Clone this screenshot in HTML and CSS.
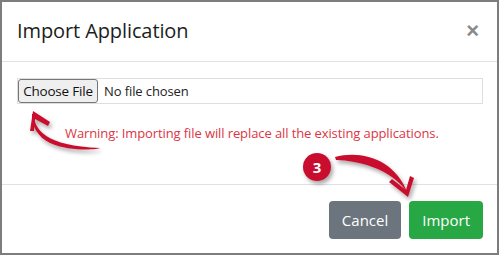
FILE: index.html
```html
<!DOCTYPE html>
<html lang="en">
<head>
  <meta charset="UTF-8" />
  <title>Import Application</title>
  <link rel="stylesheet" href="styles.css">
</head>
<body>

<div class="modal">
  <div class="modal-header">
    <h5 class="modal-title">Import Application</h5>
    <button class="close" type="button">&times;</button>
  </div>

  <div class="modal-body">
    <input type="file" class="file-input">
    <p class="warning">Warning: Importing file will replace all the existing applications.</p>
  </div>

  <div class="modal-footer">
    <button class="btn btn-secondary" type="button">Cancel</button>
    <button class="btn btn-success" type="button">Import</button>
  </div>

  <!-- annotations drawn over the dialog -->
  <svg class="marks" width="499" height="255" viewBox="0 0 499 255">
    <defs>
      <filter id="shadow" x="-20%" y="-20%" width="140%" height="140%">
        <feDropShadow dx="2" dy="3" stdDeviation="2" flood-color="#000" flood-opacity="0.35"/>
      </filter>
    </defs>
    <g filter="url(#shadow)" fill="#c8102e">
      <path d="M34 114 C 34 130, 46 146, 100 148 C 98 149.5, 70 152, 50 143 C 38 137, 31 126, 32 114 Z"/>
      <path d="M33 111 L 30 131 L 34 131 L 35 119 L 48 126 L 50 122 Z"/>
      <path d="M335 157 C 360 150, 395 158, 408 194 C 404 186, 384 162, 336 160 Z"/>
      <path d="M408 197 L 389 182 L 392 179 L 406 190 L 410 176 L 414 178 Z"/>
      <circle cx="317" cy="167" r="14"/>
    </g>
    <text class="badge-text" x="317" y="172.5" text-anchor="middle">3</text>
  </svg>
</div>

</body>
</html>
```

FILE: styles.css
```css
* {
  box-sizing: border-box;
}

body {
  margin: 0;
  padding: 0;
  background: #fff;
  font-family: "Open Sans", "Noto Sans", sans-serif;
  color: #212529;
}

.modal {
  position: relative;
  width: 499px;
  height: 255px;
  border: 2px solid #7d7d7d;
  background: #fff;
  display: flex;
  flex-direction: column;
}

.modal-header {
  display: flex;
  align-items: center;
  justify-content: space-between;
  padding: 14px 18px 15px 15px;
  border-bottom: 1px solid #dee2e6;
}

.modal-title {
  margin: 0;
  font-size: 20px;
  font-weight: 400;
  line-height: 30px;
  letter-spacing: -0.1px;
  color: #1b1e21;
}

.close {
  background: none;
  border: none;
  padding: 0;
  font-size: 22px;
  line-height: 1;
  font-weight: 700;
  color: #8a8a8a;
  cursor: pointer;
  font-family: "Liberation Sans", sans-serif;
}

.modal-body {
  flex: 1;
  padding: 16px 14px 0 15px;
}

.file-input {
  display: block;
  width: 466px;
  height: 26px;
  padding: 0;
  border: 1px solid #dedede;
  font-family: "Open Sans", sans-serif;
  font-size: 13px;
  color: #222;
  letter-spacing: -0.1px;
}

.file-input::file-selector-button {
  height: 24px;
  width: 80px;
  margin: 0 6px 0 0;
  padding: 0;
  border: 1px solid #767676;
  border-radius: 3px;
  background: #efefef;
  color: #111;
  font-family: "Open Sans", sans-serif;
  font-size: 13.5px;
  letter-spacing: -0.2px;
}

.warning {
  margin: 20px 0 0 48px;
  font-size: 13px;
  line-height: 18px;
  color: #dc3545;
  letter-spacing: -0.1px;
}

.modal-footer {
  display: flex;
  justify-content: flex-end;
  gap: 8px;
  padding: 16px 14px 14px 0;
  border-top: 1px solid #dee2e6;
}

.btn {
  height: 38px;
  padding: 0 13px;
  border: none;
  border-radius: 4px;
  color: #fff;
  font-family: "Open Sans", sans-serif;
  font-size: 15px;
  cursor: pointer;
}

.btn-secondary {
  background: #6c757d;
}

.btn-success {
  background: #28a745;
}

.marks {
  position: absolute;
  left: -2px;
  top: -2px;
  pointer-events: none;
}

.badge-text {
  fill: #fff;
  font-family: "Open Sans", sans-serif;
  font-size: 15px;
  font-weight: 700;
}
```
